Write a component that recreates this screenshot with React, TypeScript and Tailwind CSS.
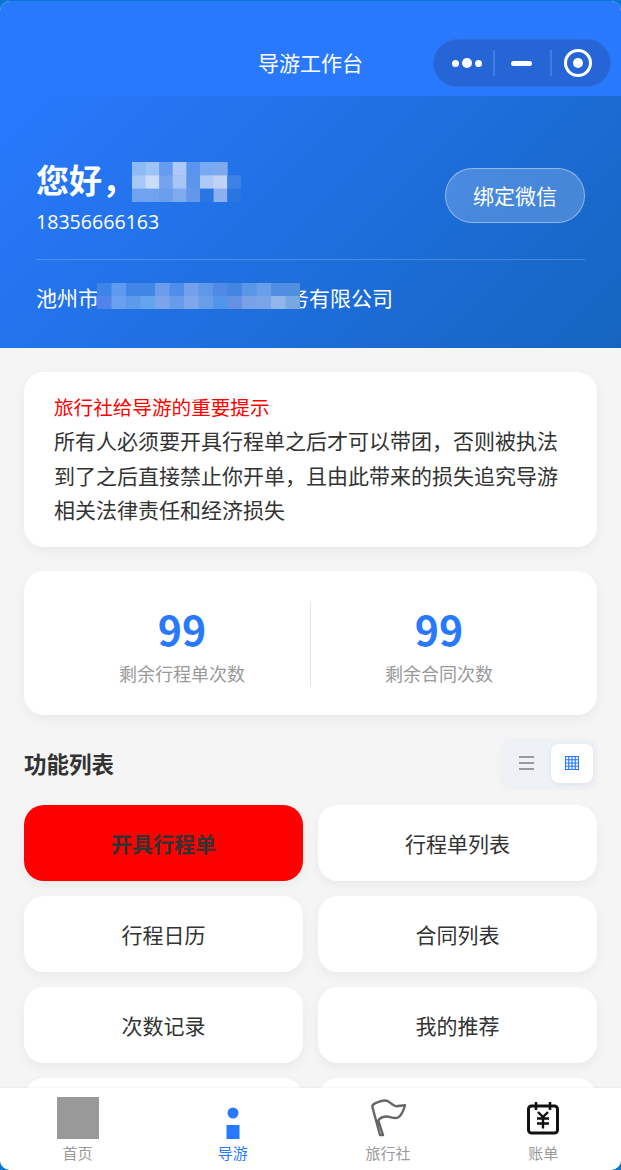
const features = ["开具行程单", "行程单列表", "行程日历", "合同列表", "次数记录", "我的推荐", "", ""];

const nameBlocks = [
  ["#8db9f5", "#9ec3f6", "#669cf0", "#aec8f7", "#5a94ec", "#78aaf3", "#7fa9ee", ""],
  ["#a6c8f8", "#c9dcfa", "#75a3f0", "#a8c6f5", "#5a96ec", "#aecbf7", "#c0d2f6", "#3d81e6"],
  ["#6fa3f0", "#6fa3f0", "#6a9fee", "#80aaf0", "#6496ea", "#2a75e4", "#8bafef", "#2a75e0"]
];

const companyBlocks = [
  ["#3d84e8", "#5f9af0", "#3f86e8", "#3f86e6", "#6a9eec", "#4e8ee8", "#73a0ec", "#5f98e8", "#4f8ae6", "#4484e2", "#5a96e6", "#6a9ee8", "#508ee2", "#508ee0"],
  ["#5084ea", "#6aa0f0", "#5c9aec", "#62a4ee", "#7ca4ec", "#669cea", "#80a6ec", "#669ee8", "#4f96e8", "#6690e2", "#7aa0e6", "#7aa4e8", "#92b6ec", "#78a8e4"]
];

function Mosaic({ blocks, size, height }: { blocks: string[][]; size: number; height: number }) {
  return (
    <svg width={blocks[0].length * size} height={blocks.length * height} className="block" aria-hidden="true">
      {blocks.map((row, y) =>
        row.map((color, x) =>
          color ? <rect key={`${x}-${y}`} x={x * size} y={y * height} width={size + 0.5} height={height + 0.5} fill={color} /> : null
        )
      )}
    </svg>
  );
}

function Capsule() {
  return (
    <div className="absolute top-[38px] right-[10px] flex h-[48px] w-[178px] items-center rounded-full border border-[#2f6fdc] bg-[#2565d6]">
      <div className="flex w-[59px] items-center justify-center gap-[3px] pl-[7px]">
        <span className="h-[7px] w-[7px] rounded-full bg-white" />
        <span className="h-[10px] w-[10px] rounded-full bg-white" />
        <span className="h-[7px] w-[7px] rounded-full bg-white" />
      </div>
      <div className="h-[26px] w-[2px] bg-[#3f7de6]" />
      <div className="flex w-[55px] justify-center pr-[2px]">
        <span className="h-[5px] w-[21px] rounded-full bg-white" />
      </div>
      <div className="h-[26px] w-[2px] bg-[#3f7de6]" />
      <div className="flex flex-1 justify-center pr-[6px]">
        <span className="flex h-[28px] w-[28px] items-center justify-center rounded-full border-[3px] border-white">
          <span className="h-[10px] w-[10px] rounded-full bg-white" />
        </span>
      </div>
    </div>
  );
}

function Hero() {
  return (
    <section className="h-[252px] shrink-0 bg-[linear-gradient(135deg,#2979ff,#1565c0)] px-[36px] pt-[60px] text-white">
      <div className="flex h-[104px] items-start justify-between border-b border-white/20">
        <div>
          <div className="flex h-[46px] items-center">
            <span className="text-[33px] leading-[40px] font-bold">您好，</span>
            <span className="mt-[6px] -ml-[3px]">
              <Mosaic blocks={nameBlocks} size={13.6} height={13.3} />
            </span>
          </div>
          <div className="mt-[6px] text-[19.600px] leading-[28px] font-['Open_Sans','Noto_Sans_CJK_SC',sans-serif]">18356666163</div>
        </div>
        <button
          type="button"
          className="mt-[12px] flex h-[55px] w-[140px] items-center justify-center rounded-full border border-white/40 bg-white/20 text-[21px] text-white"
        >
          绑定微信
        </button>
      </div>
      <div className="relative mt-[22px] text-[21px] leading-[30px]">
        池州市<span className="inline-block w-[189px]" />务有限公司
        <span className="absolute top-[1px] left-[61px]">
          <Mosaic blocks={companyBlocks} size={14.5} height={13} />
        </span>
      </div>
    </section>
  );
}

function NoticeCard() {
  return (
    <div className="h-[175px] rounded-[20px] bg-white px-[30px] pt-[20px] shadow-[0_4px_12px_rgba(0,0,0,0.05)]">
      <p className="text-[19.6px] leading-[30px] text-[#ff0000]">旅行社给导游的重要提示</p>
      <p className="mt-[1px] text-[21px] leading-[34.500px] text-[#333]">
        所有人必须要开具行程单之后才可以带团，否则被执法到了之后直接禁止你开单，且由此带来的损失追究导游相关法律责任和经济损失
      </p>
    </div>
  );
}

function Stat({ value, label }: { value: string; label: string }) {
  return (
    <div className="flex flex-1 flex-col items-center">
      <span className="text-[41px] leading-[56px] font-bold text-[#2979ff]">{value}</span>
      <span className="mt-[4px] text-[18px] leading-[26px] text-[#999]">{label}</span>
    </div>
  );
}

function StatsCard() {
  return (
    <div className="flex h-[144px] items-center rounded-[20px] bg-white px-[30px] shadow-[0_4px_12px_rgba(0,0,0,0.05)]">
      <Stat value="99" label="剩余行程单次数" />
      <div className="h-[85px] w-px bg-[#e5e5e5]" />
      <Stat value="99" label="剩余合同次数" />
    </div>
  );
}

function ViewToggle() {
  return (
    <div className="flex h-[48px] w-[96px] items-center rounded-[10px] bg-[#eef1f6] p-[4px] shadow-[0_2px_6px_rgba(0,0,0,0.03)]">
      <div className="flex h-[39px] w-[46px] items-center justify-center pr-[4px]">
        <svg width="15" height="14" viewBox="0 0 15 14" aria-hidden="true">
          <path d="M0 1h15M0 7h15M0 13h15" stroke="#999" strokeWidth="2" />
        </svg>
      </div>
      <div className="flex h-[39px] w-[42px] items-center justify-center rounded-[8px] bg-white shadow-[0_1px_4px_rgba(0,0,0,0.08)]">
        <svg width="14" height="14" viewBox="0 0 14 14" aria-hidden="true">
          <path
            d="M.5 0v14M3.75 0v14M7 0v14M10.25 0v14M13.5 0v14M0 .5h14M0 3.75h14M0 7h14M0 10.25h14M0 13.5h14"
            stroke="#2979ff"
            strokeWidth="1.2"
            fill="none"
          />
        </svg>
      </div>
    </div>
  );
}

function FeatureGrid() {
  return (
    <div className="mt-[18px] grid grid-cols-2 gap-[15px]">
      {features.map((item, index) => (
        <button
          key={index}
          type="button"
          className={[
            "flex h-[76px] items-center justify-center rounded-[20px] pt-[2px] text-[21px] text-[#333] shadow-[0_4px_12px_rgba(0,0,0,0.05)]",
            index === 0 ? "bg-[#ff0000] font-bold" : "bg-white"
          ].join(" ")}
        >
          {item}
        </button>
      ))}
    </div>
  );
}

function TabItem({ label, active, children }: { label: string; active?: boolean; children: React.ReactNode }) {
  return (
    <div className="flex flex-col items-center pt-[9px]">
      <div className="h-[42px] w-[42px]">{children}</div>
      <span className={`mt-[3px] text-[15px] leading-[22px] ${active ? "text-[#2979ff]" : "text-[#999]"}`}>{label}</span>
    </div>
  );
}

function TabBar() {
  return (
    <nav className="grid h-[82px] shrink-0 grid-cols-4 rounded-b-[10px] bg-white shadow-[0_-1px_2px_rgba(0,0,0,0.04)]">
      <TabItem label="首页">
        <div className="h-full w-full bg-[#999]" />
      </TabItem>
      <TabItem label="导游" active>
        <svg width="42" height="42" viewBox="0 0 42 42" aria-hidden="true">
          <circle cx="21" cy="16" r="5.5" fill="#2979ff" />
          <rect x="14.5" y="28" width="13" height="14" fill="#2979ff" />
        </svg>
      </TabItem>
      <TabItem label="旅行社">
        <svg width="42" height="42" viewBox="0 0 42 42" fill="none" aria-hidden="true">
          <path
            d="M13 38 5.5 10.5C5 8.5 6 7.2 8 6.3 13 4 18 2.5 21 4.2 24 6 26 9 29 9.2 31.500 9.300 34 8.500 38 8.200 37 12 35 18 31 20.500 27 22.500 23 19 19 19.500 15 20 12.500 21 11.300 23.500L16 38Z"
            stroke="#666"
            strokeWidth="2.4"
            strokeLinejoin="round"
          />
        </svg>
      </TabItem>
      <TabItem label="账单">
        <svg width="42" height="42" viewBox="0 0 42 42" fill="none" aria-hidden="true">
          <rect x="6.500" y="9" width="29" height="27" rx="3" stroke="#111" strokeWidth="3" />
          <path d="M14 5v8M28 5v8" stroke="#111" strokeWidth="2.600" />
          <path d="M16 15l5 5 5-5M15 21.500h12M15 26.500h12M21 20v11.500" stroke="#111" strokeWidth="2.400" />
        </svg>
      </TabItem>
    </nav>
  );
}

export default function App() {
  return (
    <div className="h-[1170px] w-[621px] overflow-hidden bg-[#0a78d0] pt-px font-['Noto_Sans_CJK_SC',sans-serif]">
      <div className="flex h-[1169px] flex-col overflow-hidden rounded-[10px] bg-[#f5f5f5]">
        <header className="relative flex h-[95px] shrink-0 items-end justify-center bg-[#2979ff] pb-[19px]">
          <h1 className="text-[21px] leading-[30px] font-normal text-white">导游工作台</h1>
          <Capsule />
        </header>
        <Hero />
        <main className="min-h-0 flex-1 overflow-hidden px-[24px] pt-[24px]">
          <div className="flex flex-col gap-[24px]">
            <NoticeCard />
            <StatsCard />
          </div>
          <div className="mt-[24px] flex items-center justify-between">
            <h2 className="text-[22.500px] leading-[48px] font-bold text-[#333]">功能列表</h2>
            <ViewToggle />
          </div>
          <FeatureGrid />
        </main>
        <TabBar />
      </div>
    </div>
  );
}
